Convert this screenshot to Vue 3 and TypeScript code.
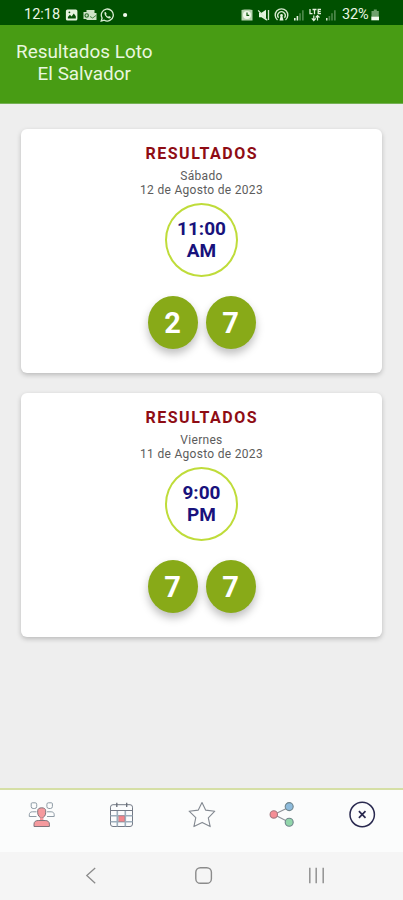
<script setup lang="ts">
interface Draw {
  day: string
  date: string
  hour: string
  period: string
  balls: number[]
}

const draws: Draw[] = [
  { day: 'Sábado', date: '12 de Agosto de 2023', hour: '11:00', period: 'AM', balls: [2, 7] },
  { day: 'Viernes', date: '11 de Agosto de 2023', hour: '9:00', period: 'PM', balls: [7, 7] },
]
</script>

<template>
  <div class="screen">
    <div class="status">
      <span class="clock">12:18</span>
      <svg class="left-icons" width="64" height="14" viewBox="0 0 64 14">
        <rect x="0.9" y="1.5" width="11.5" height="11" rx="1.6" fill="#e6f3df" />
        <path d="M2.9 10.500V9l2-2.200 1.700 1.800 2.200-3 2 2.600v2.300z" fill="#075207" />
        <circle cx="4.400" cy="4.300" r=".9" fill="#075207" />
        <path d="M21.500 2h8v3h2v7h-10v-1h-3V4h3z" fill="#cfe3c8" />
        <circle cx="21.700" cy="7.500" r="1.700" fill="none" stroke="#2a6e29" stroke-width="1.100" />
        <path d="M25 8.500l2.700 1.500 3.500-2.700" fill="none" stroke="#4b8749" />
        <path d="M36.200 13l.9-3A6 6 0 1 1 39.300 12.200z" fill="none" stroke="#d9ecd2" stroke-width="1.300" />
        <path d="M39.500 4.300l1.200-.4 1 2-.7.9c.5 1 1.200 1.600 2.200 2l.8-.9 1.900 1-.4 1.200c-2.800 1.400-6.500-2.500-6-5.800z" fill="#d9ecd2" />
        <circle cx="60.100" cy="7" r="2.100" fill="#f2faed" />
      </svg>
      <svg class="right-icons" width="98" height="14" viewBox="0 0 98 14">
        <path d="M.5 2l3-.5h5l3 .5v10.500H.5z" fill="#b5d2ae" />
        <circle cx="6" cy="7" r="4" fill="#eef8e8" />
        <path d="M6 4.500V7.300h2.200" fill="none" stroke="#0c580b" stroke-width="1.200" />
        <path d="M18 4.800h2.500L25 1.800v10.400L20.500 9.300H18z" fill="#e4f2de" />
        <path d="M17.200 2.400l9 10M27.500 2v10" stroke="#d5e8ce" stroke-width="1.300" />
        <g fill="none" stroke="#d5e8ce" stroke-width="1.400">
          <path d="M36.500 12a6.300 6.300 0 1 1 8 0" />
          <path d="M37.600 9.800a3.700 3.700 0 1 1 5.800 0" />
        </g>
        <path d="M40.500 6a1.400 1.400 0 0 1 1 2.400l1 4h-4l1-4a1.400 1.400 0 0 1 1-2.400z" fill="#e4f2de" />
        <path d="M53 10h1.600v2.500H53zM55.600 8h1.600v4.500h-1.600z" fill="#e4f2de" />
        <path d="M58.200 5.300h1.700v7.200h-1.700zM61 2.300h1.700v10.200H61z" fill="#4b8749" />
        <path d="M69 1v4.700h2.500M71.500 1.500h4M73.500 1.500v4.700M80 1.500h-2.800v4.200H80M77.200 3.600h2.500" fill="none" stroke="#e4f2de" stroke-width="1.300" />
        <path d="M72.800 12.500V7.500M70.800 10.300l2 2.200 2-2.200M76.500 12.500V7.500M74.700 9.500l1.800-2 2 2" fill="none" stroke="#e4f2de" stroke-width="1.200" />
        <path d="M85 10h1.500v2.500H85z" fill="#d5e8ce" />
        <path d="M87.600 8h1.600v4.500h-1.600zM90.200 5.300h1.600v7.200h-1.600zM93 2.300h1.700v10.200H93z" fill="#4b8749" />
      </svg>
      <span class="battery-text">32%</span>
      <svg class="battery" width="10" height="14" viewBox="0 0 10 14">
        <path d="M2.800 1.500h3V3h2v5.500H.5V3h2.300z" fill="#6fa16c" />
        <path d="M.3 8.500h7.700v3.800H.3z" fill="#f2faed" />
      </svg>
    </div>

    <header class="header">
      <h1 class="title">Resultados Loto<br />El Salvador</h1>
    </header>

    <main class="content">
      <section v-for="draw in draws" :key="draw.date" class="card">
        <h2 class="heading">RESULTADOS</h2>
        <p class="date">{{ draw.day }}<br />{{ draw.date }}</p>
        <div class="time">
          <span>{{ draw.hour }}</span>
          <span>{{ draw.period }}</span>
        </div>
        <div class="balls">
          <span v-for="(ball, i) in draw.balls" :key="i" class="ball">{{ ball }}</span>
        </div>
      </section>
    </main>

    <nav class="tabs">
      <svg width="28" height="28" viewBox="0 0 28 28">
        <g fill="#fcfdfd" stroke="#8d9aa4" stroke-width="1">
          <path d="M4.200 2.800q0-1 1-1h3q1.500 0 1.500 1.500v2.200q0 2-2 2H6.200q-2 0-2-2zM19.900 3.300q0-1.500 1.500-1.500h3q1 0 1 1v2.700q0 2-2 2h-1.500q-2 0-2-2z" />
          <path d="M9.500 15.500H2.300v-1.800c0-1.800 1.200-2.900 3-2.900h4.200M20 15.500h7.200v-1.800c0-1.800-1.200-2.900-3-2.900H20" />
        </g>
        <g fill="#f59a9e" stroke="#7f747c" stroke-width="1">
          <path d="M10.700 9.800c0-2 1.600-3 4-3s4 1 4 3v2c0 2.500-1.800 5-4 5s-4-2.500-4-5z" />
          <path d="M13 16.500h3.400v3H13z" stroke="none" />
          <path d="M7 25.500v-2.300c0-2.500 1.700-3.700 4.200-3.700h7c2.500 0 4.200 1.200 4.200 3.700v2.300z" />
        </g>
      </svg>
      <svg width="28" height="28" viewBox="0 0 28 28">
        <rect x="3.500" y="3.700" width="22" height="21.800" rx="2.500" fill="#fbfcfd" stroke="#737a86" />
        <path d="M3.500 14.700h22M3.500 20.800h22M10.300 9.500v16M18.300 9.500v16" stroke="#9daebc" stroke-width="1.600" />
        <path d="M3.500 9.500h22" stroke="#737a86" />
        <path d="M9.800 1.800V6M19.700 1.800V6" stroke="#666c77" stroke-width="1.300" />
        <rect x="11.800" y="14.900" width="5.800" height="5.700" fill="#f3868c" stroke="#a77b86" stroke-width=".6" />
      </svg>
      <svg width="28" height="28" viewBox="0 0 28 28">
        <path d="M14 1.500l3.600 7.600 9.200 1.100-6.500 6.600 1.900 8.800-8-4.200-8.300 4.200 1.900-9-6.700-6.400 9.200-1.100z" fill="#fcfdfd" stroke="#838991" stroke-width="1.100" stroke-linejoin="round" />
      </svg>
      <svg width="28" height="28" viewBox="0 0 28 28">
        <path d="M6 13.500L21.500 6M6 13.500L21.500 21.500" stroke="#8e9298" stroke-width="1.200" />
        <g stroke="#70858c" stroke-width="1.100">
          <circle cx="5.800" cy="13.400" r="3.700" fill="#f58d95" stroke="#a4777f" />
          <circle cx="21.200" cy="5.600" r="4" fill="#8dbbdc" />
          <circle cx="21.200" cy="21.200" r="4" fill="#91d5aa" />
        </g>
      </svg>
      <svg width="28" height="28" viewBox="0 0 28 28">
        <circle cx="14.200" cy="13.500" r="12.200" fill="#fcfdfd" stroke="#29294f" stroke-width="1.500" />
        <path d="M10.900 10.200l6.600 6.600M17.500 10.200l-6.600 6.600" stroke="#29294f" stroke-width="1.700" />
      </svg>
    </nav>

    <div class="system">
      <svg width="20" height="20" viewBox="0 0 20 20">
        <path d="M14.200 2L5.800 9.600l8.400 7.700" fill="none" stroke="#8b8b8b" stroke-width="1.300" />
      </svg>
      <svg width="20" height="20" viewBox="0 0 20 20">
        <rect x="1.800" y="1.700" width="15.600" height="15.600" rx="4.600" fill="none" stroke="#8b8b8b" stroke-width="1.400" />
      </svg>
      <svg width="20" height="20" viewBox="0 0 20 20">
        <path d="M3.800 1.800v15.500M10.200 1.800v15.500M17.200 1.800v15.500" stroke="#929292" stroke-width="1.500" />
      </svg>
    </div>
  </div>
</template>

<style>
body {
  margin: 0;
}
</style>

<style scoped>
.screen {
  box-sizing: border-box;
  width: 403px;
  height: 900px;
  display: flex;
  flex-direction: column;
  background: #eeeeee;
  font-family: Roboto, "Liberation Sans", sans-serif;
  overflow: hidden;
}

svg {
  display: block;
  flex: none;
}

.status {
  flex: none;
  height: 25px;
  box-sizing: border-box;
  padding: 4px 22px 0 24px;
  display: flex;
  align-items: center;
  background: #005000;
  color: #eaf5e4;
}

.clock {
  width: 41px;
  font-size: 14.5px;
  line-height: 18px;
}

.left-icons {
  margin-right: 112px;
}

.battery-text {
  width: 29px;
  margin-left: 3px;
  font-size: 14.5px;
  line-height: 18px;
  letter-spacing: -0.2px;
}

.header {
  flex: none;
  height: 79px;
  box-sizing: border-box;
  padding: 16px 16px 0;
  display: flex;
  align-items: flex-start;
  background: #489c14;
  border-bottom: 1px solid #76b055;
}

.title {
  margin: 0;
  font-size: 18.9px;
  font-weight: 400;
  line-height: 22px;
  text-align: center;
  color: #e9f7df;
}

.content {
  flex: 1;
  padding: 24.500px 21px 0;
  display: flex;
  flex-direction: column;
  gap: 19.500px;
}

.card {
  height: 244.500px;
  box-sizing: border-box;
  padding-top: 16.500px;
  display: flex;
  flex-direction: column;
  align-items: center;
  background: #ffffff;
  border-radius: 6px;
  box-shadow: 0 2px 5px rgba(0, 0, 0, 0.22);
}

.heading {
  margin: 0;
  font-size: 16px;
  font-weight: 700;
  line-height: 18px;
  letter-spacing: 1.500px;
  text-indent: 0.700px;
  color: #8e0c14;
}

.date {
  margin: 5.500px 0 0;
  font-size: 12px;
  line-height: 14.500px;
  letter-spacing: 0.300px;
  text-align: center;
  color: #5c5c5c;
}

.time {
  width: 73px;
  height: 74px;
  box-sizing: border-box;
  margin-top: 5.500px;
  padding-bottom: 1px;
  display: flex;
  flex-direction: column;
  align-items: center;
  justify-content: center;
  border: 2px solid #bfdc3a;
  border-radius: 50%;
  font-size: 19px;
  font-weight: 700;
  line-height: 22px;
  color: #18127c;
}

.balls {
  margin-top: 19px;
  display: flex;
  gap: 8px;
}

.ball {
  width: 50px;
  height: 53px;
  display: flex;
  align-items: center;
  justify-content: center;
  border-radius: 50%;
  background: #88aa18;
  box-shadow: 0 5px 8px rgba(0, 0, 0, 0.25);
  font-size: 29px;
  font-weight: 700;
  color: #ffffff;
}

.tabs {
  flex: none;
  height: 64px;
  box-sizing: border-box;
  padding: 11px 27px 0;
  display: flex;
  justify-content: space-between;
  background: #fbfcfc;
  border-top: 2px solid #d5dfa5;
}

.system {
  flex: none;
  height: 48px;
  box-sizing: border-box;
  padding: 0 77px 0 81px;
  display: flex;
  align-items: center;
  justify-content: space-between;
  background: #f5f5f5;
}
</style>
